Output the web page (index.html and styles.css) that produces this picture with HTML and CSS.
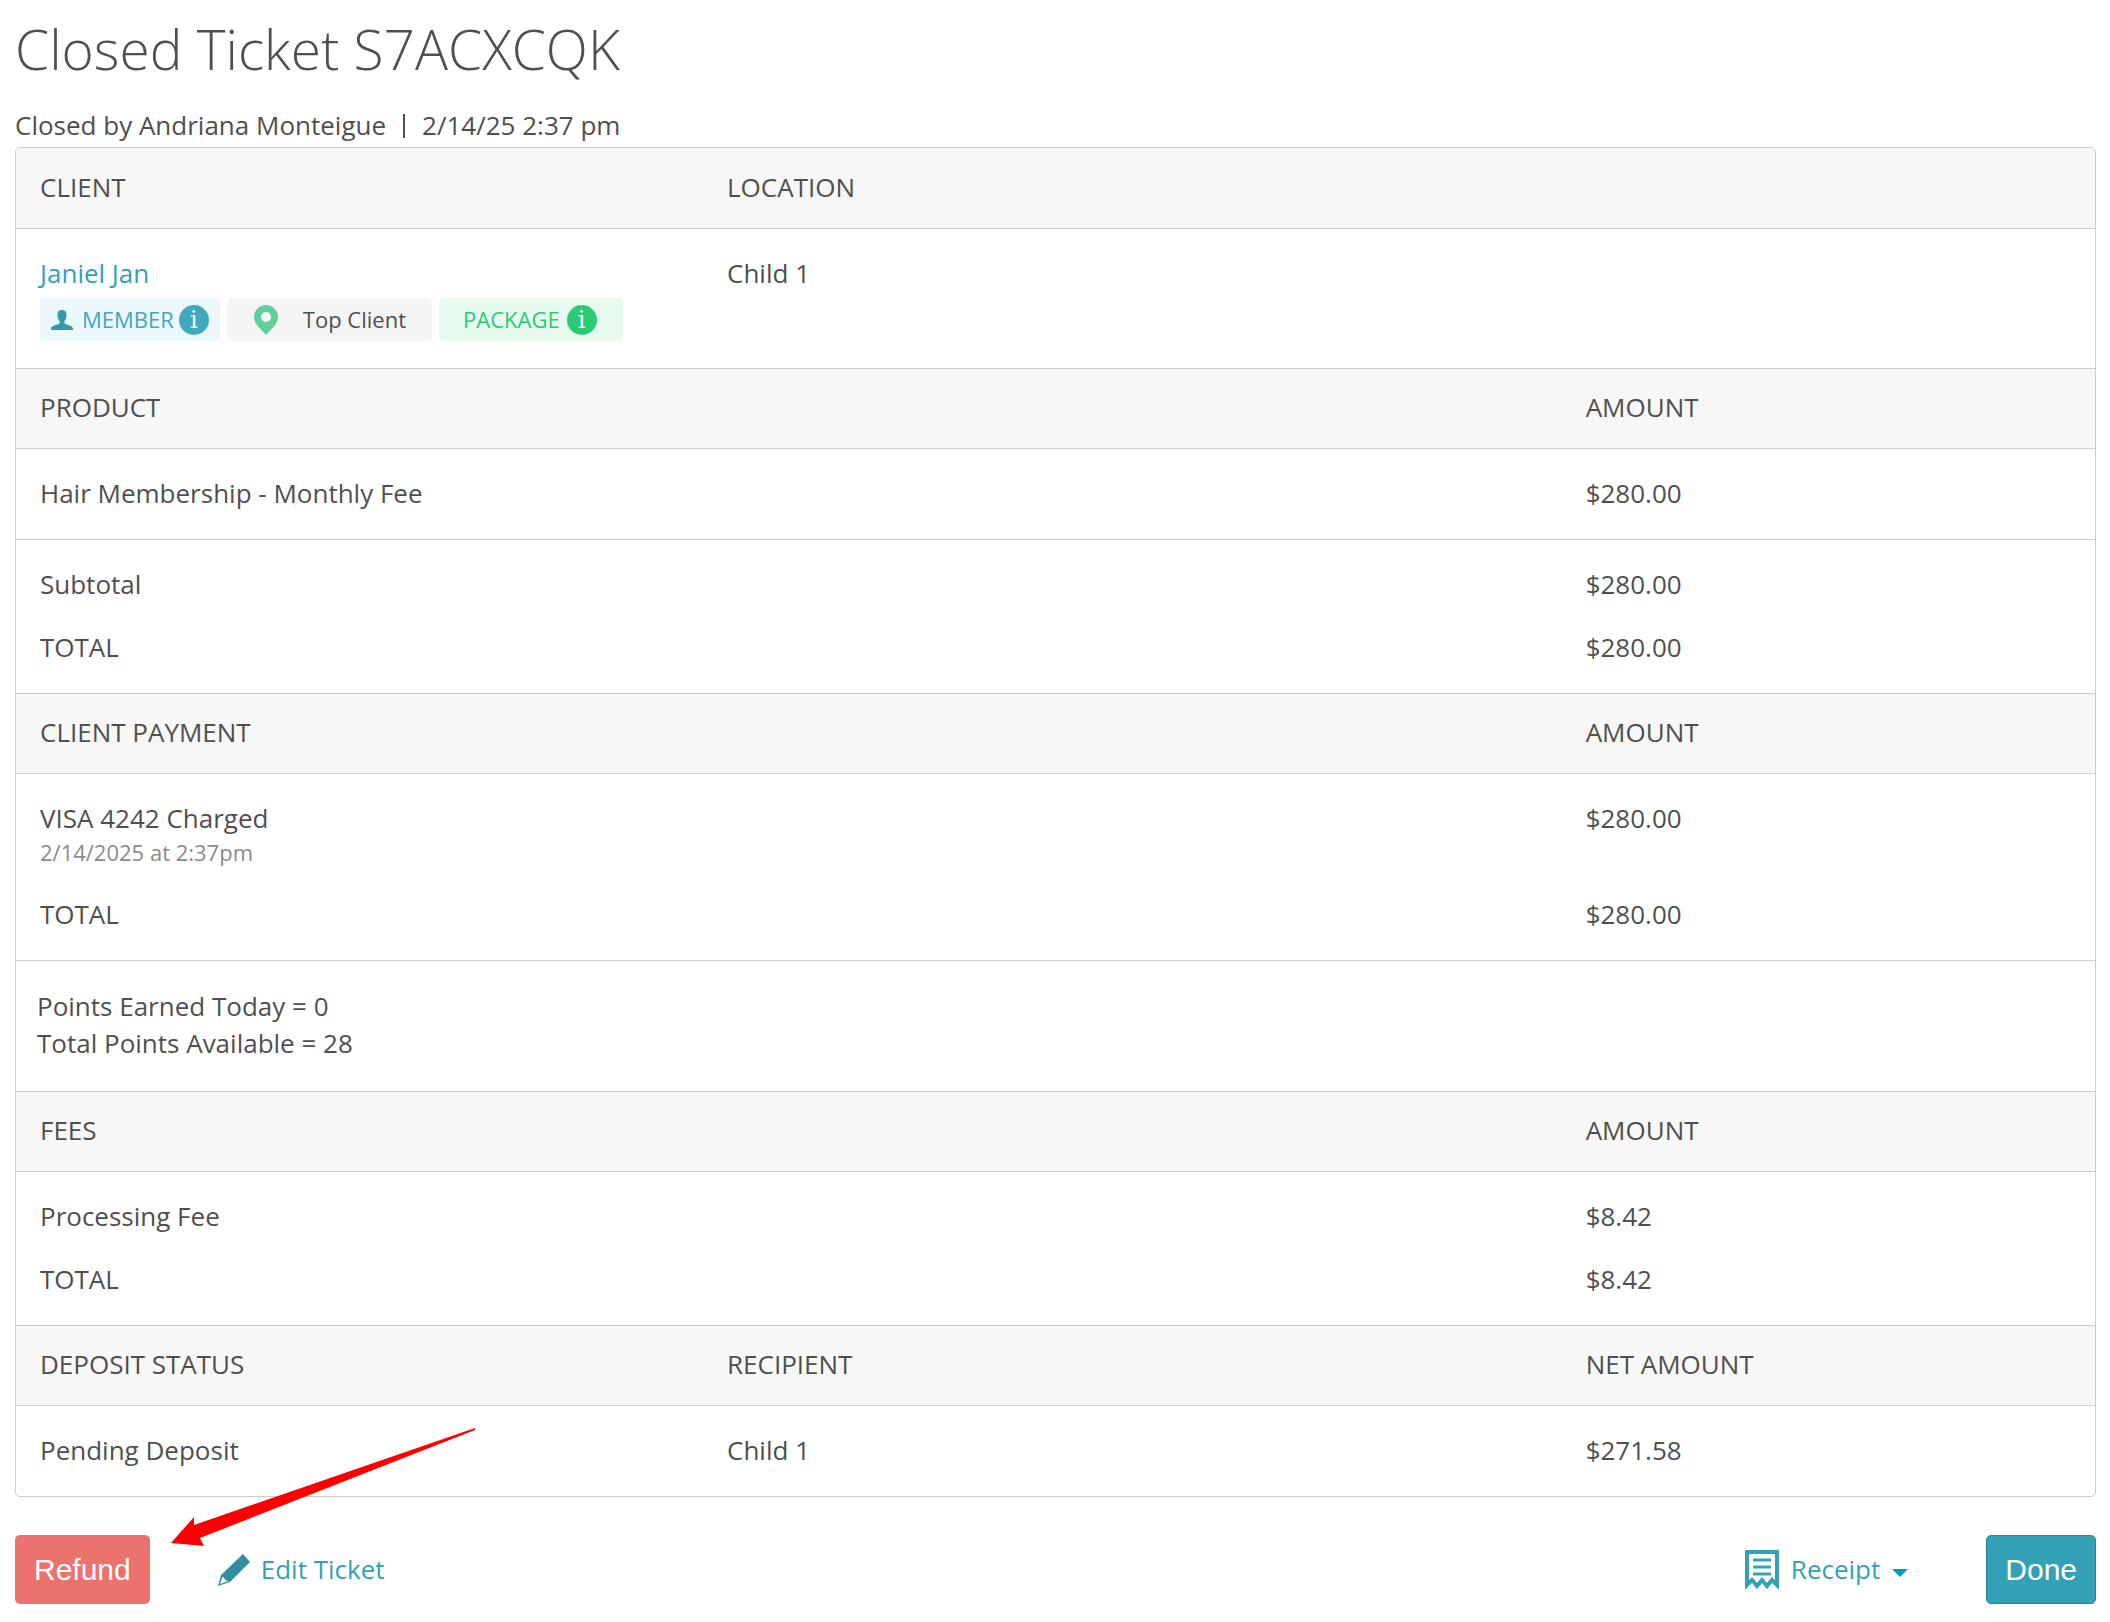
FILE: index.html
```html
<!DOCTYPE html>
<html lang="en">
<head>
  <meta charset="UTF-8" />
  <meta name="viewport" content="width=device-width, initial-scale=1.0" />
  <title>Closed Ticket S7ACXCQK</title>
  <link rel="stylesheet" href="styles.css">
</head>
<body>
  <h1>Closed Ticket S7ACXCQK</h1>
  <p class="closed-by">
    <span>Closed by Andriana Monteigue</span>
    <span class="divider"></span>
    <span>2/14/25 2:37 pm</span>
  </p>

  <div class="ticket">
    <table>
      <colgroup>
        <col class="col-name">
        <col class="col-detail">
        <col>
      </colgroup>

      <tbody>
        <tr class="head">
          <th>CLIENT</th>
          <th>LOCATION</th>
          <th></th>
        </tr>
        <tr class="first">
          <td>
            <a href="#">Janiel Jan</a>
            <div class="badges">
              <span class="badge member">
                <svg class="person" viewBox="0 0 22 20" width="22" height="20">
                  <path d="M11 0C7.800 0 6.300 2.200 6.500 5.500C6.600 8 7.300 9.600 8.600 11V13C8 15.500 0 14.500 0 19V20H22V19C22 14.500 14 15.500 13.400 13V11C14.700 9.600 15.400 8 15.500 5.500C15.700 2.200 14.200 0 11 0Z" fill="#3399ae"/>
                </svg>
                <span>MEMBER</span>
                <span class="info">i</span>
              </span>
              <span class="badge top-client">
                <svg viewBox="0 0 24 30" width="24" height="30">
                  <path fill-rule="evenodd" d="M12 0C5.400 0 0 5.200 0 12C0 19 7 24 12 30C17 24 24 19 24 12C24 5.200 18.600 0 12 0ZM12 7A5 5 0 1 1 12 17A5 5 0 1 1 12 7Z" fill="#5fcf9f"/>
                </svg>
                <span>Top Client</span>
              </span>
              <span class="badge package">
                <span>PACKAGE</span>
                <span class="info">i</span>
              </span>
            </div>
          </td>
          <td>Child 1</td>
          <td></td>
        </tr>
      </tbody>

      <tbody>
        <tr class="head">
          <th>PRODUCT</th>
          <th></th>
          <th>AMOUNT</th>
        </tr>
        <tr class="first">
          <td>Hair Membership - Monthly Fee</td>
          <td></td>
          <td>$280.00</td>
        </tr>
        <tr class="first">
          <td>Subtotal</td>
          <td></td>
          <td>$280.00</td>
        </tr>
        <tr>
          <td>TOTAL</td>
          <td></td>
          <td>$280.00</td>
        </tr>
      </tbody>

      <tbody>
        <tr class="head">
          <th>CLIENT PAYMENT</th>
          <th></th>
          <th>AMOUNT</th>
        </tr>
        <tr class="first">
          <td>
            VISA 4242 Charged
            <small>2/14/2025 at 2:37pm</small>
          </td>
          <td></td>
          <td>$280.00</td>
        </tr>
        <tr>
          <td>TOTAL</td>
          <td></td>
          <td>$280.00</td>
        </tr>
        <tr class="points">
          <td colspan="3">
            Points Earned Today = 0<br>
            Total Points Available = 28
          </td>
        </tr>
      </tbody>

      <tbody>
        <tr class="head">
          <th>FEES</th>
          <th></th>
          <th>AMOUNT</th>
        </tr>
        <tr class="first">
          <td>Processing Fee</td>
          <td></td>
          <td>$8.42</td>
        </tr>
        <tr>
          <td>TOTAL</td>
          <td></td>
          <td>$8.42</td>
        </tr>
      </tbody>

      <tbody>
        <tr class="head">
          <th>DEPOSIT STATUS</th>
          <th>RECIPIENT</th>
          <th>NET AMOUNT</th>
        </tr>
        <tr class="first">
          <td>Pending Deposit</td>
          <td>Child 1</td>
          <td>$271.58</td>
        </tr>
      </tbody>
    </table>
  </div>

  <div class="actions">
    <div class="refund">
      <button type="button" class="btn btn-refund">Refund</button>
      <svg class="arrow" viewBox="0 0 306 120" width="306" height="120">
        <path d="M0 115L23 89L23 97L304 0V2L29 110L33 118Z" fill="#ff0000"/>
      </svg>
    </div>
    <a href="#" class="edit">
      <svg viewBox="0 0 32 32" width="32" height="32">
        <path fill-rule="evenodd" d="M25 0L32 8L12 28L0 32L3 21ZM4.500 22.500L2 30L10.500 27L8 26.500Z" fill="#338da1"/>
      </svg>
      <span>Edit Ticket</span>
    </a>
    <button type="button" class="receipt">
      <svg viewBox="0 0 34 39" width="34" height="39">
        <path d="M2 35V2H32V35L27 30L22 36L17 30L12 36L7 30Z" fill="none" stroke="#33a1b5" stroke-width="4"/>
        <path d="M8 10H26M8 17H26M8 24H26" stroke="#33a1b5" stroke-width="3"/>
      </svg>
      <span>Receipt</span>
      <span class="caret"></span>
    </button>
    <button type="button" class="btn btn-done">Done</button>
  </div>
</body>
</html>
```
FILE: styles.css
```css
* {
  box-sizing: border-box;
}

body {
  font-family: "Open Sans", "Noto Sans", sans-serif;
  font-size: 26px;
  line-height: 37px;
  margin: 0;
  padding: 15px 14px 18px 15px;
  background-color: #fff;
  color: #4f4f4f;
}

h1 {
  margin: 0 0 24px;
  font-size: 55px;
  line-height: 68px;
  font-weight: 300;
}

a {
  color: #33a1b5;
  text-decoration: none;
}

.closed-by {
  display: flex;
  align-items: center;
  margin: 0 0 3px;
}

.divider {
  width: 2px;
  height: 24px;
  margin: 0 17px;
  background-color: #4f4f4f;
}

.ticket {
  border: 1px solid #ccc;
  border-radius: 5px;
  overflow: hidden;
}

table {
  width: 100%;
  table-layout: fixed;
  border-spacing: 0;
}

.col-name {
  width: 34.2%;
}

.col-detail {
  width: 41.3%;
}

th,
td {
  padding: 0 0 26px;
  font-weight: 400;
  text-align: left;
  vertical-align: top;
}

th:first-child,
td:first-child {
  padding-left: 24px;
}

.head th {
  padding-top: 20px;
  padding-bottom: 22px;
  border-top: 1px solid #ccc;
  background-color: #f7f7f7;
}

tbody:first-of-type .head th {
  border-top-color: #f7f7f7;
}

.first td {
  padding-top: 26px;
  border-top: 1px solid #ccc;
}

tr:last-child td,
.first:has(+ .first) td,
tr:has(+ .points) td {
  padding-bottom: 27px;
}

tr.points td {
  padding: 27px 21px 29px;
  border-top: 1px solid #ccc;
}

td a,
small {
  display: block;
}

small {
  padding-bottom: 2px;
  font-size: 22px;
  line-height: 31px;
  color: #8a8a8a;
}

.badges {
  display: flex;
  gap: 7px;
  margin-top: 6px;
}

.badge {
  display: flex;
  align-items: center;
  height: 43px;
  border-radius: 5px;
  font-size: 22px;
}

.member {
  gap: 5px;
  padding: 0 11px;
  background-color: #ebf7fa;
  color: #40a9bd;
}

.person {
  margin-right: 4px;
}

.top-client {
  gap: 25px;
  padding: 0 26px 0 27px;
  background-color: #f5f5f5;
}

.package {
  gap: 7px;
  padding: 0 26px 0 24px;
  background-color: #e6faef;
  color: #28ca74;
}

.info {
  width: 30px;
  height: 30px;
  border-radius: 50%;
  background-color: currentColor;
  font-family: "DejaVu Serif", serif;
  font-size: 24px;
  line-height: 30px;
  text-align: center;
}

.info::first-letter {
  color: #fff;
}

.actions {
  display: flex;
  align-items: center;
  margin-top: 38px;
}

.refund {
  position: relative;
}

/* arrow lies over the table corner and points at the button */
.arrow {
  position: absolute;
  left: 156px;
  bottom: 56px;
  pointer-events: none;
}

.btn {
  display: block;
  height: 69px;
  padding: 0 19px;
  border: 0;
  border-radius: 5px;
  color: #fff;
  font-family: "Liberation Sans", sans-serif;
  font-size: 30px;
  cursor: pointer;
}

.btn-refund {
  background-color: #ec736d;
}

.btn-done {
  padding: 0 18px;
  border: 1px solid #2a8192;
  background-color: #33a1b5;
}

.edit {
  display: flex;
  align-items: center;
  gap: 11px;
  margin: 0 auto 0 68px;
}

.receipt {
  display: flex;
  align-items: center;
  gap: 12px;
  margin-right: 78px;
  padding: 0;
  border: 0;
  background: none;
  color: #33a1b5;
  font: inherit;
  cursor: pointer;
}

.caret {
  margin-top: 6px;
  border: 8px solid transparent;
  border-top-color: #009eb8;
  border-bottom: 0;
}
```
